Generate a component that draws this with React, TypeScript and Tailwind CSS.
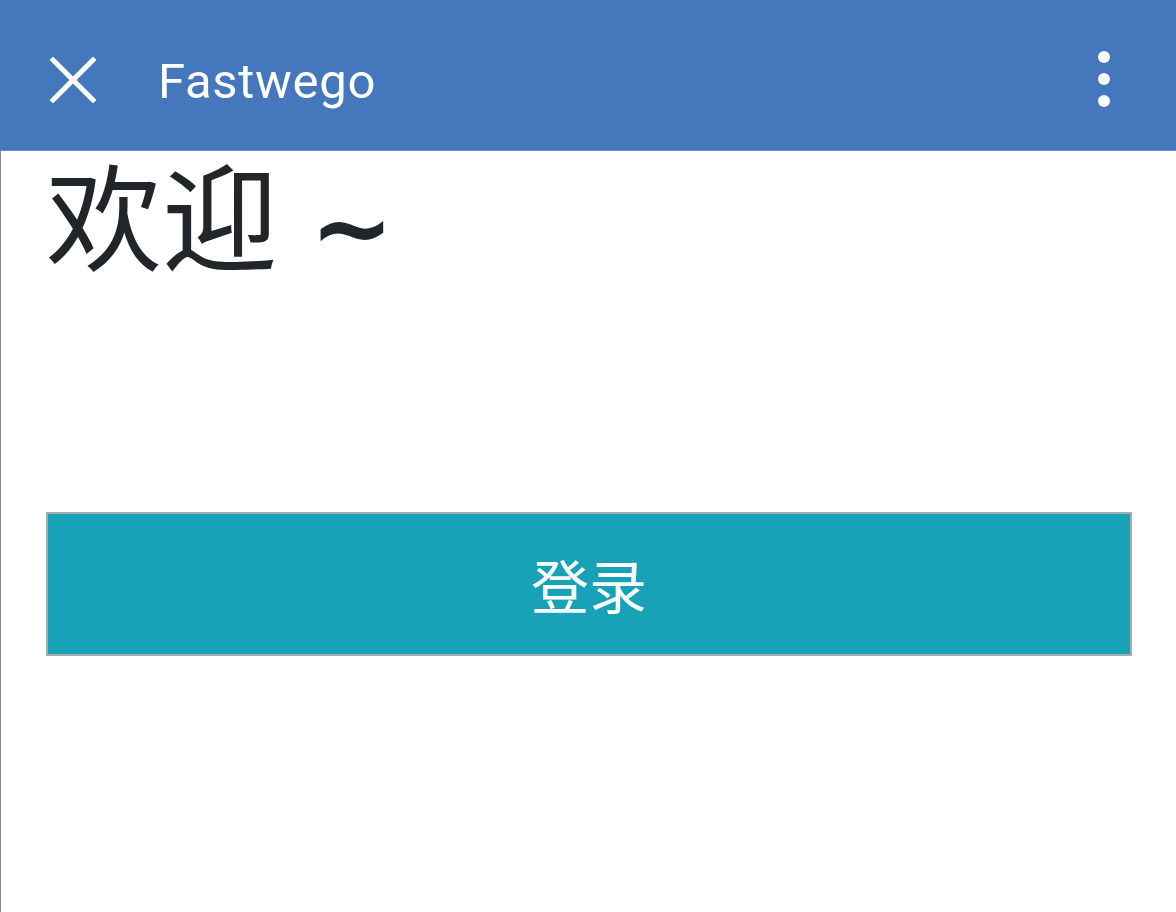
import React from "react";

const App = () => {
  return (
    <div className="w-[1176px] h-[912px] bg-white overflow-hidden flex flex-col" style={{ fontFamily: "Roboto, 'Noto Sans CJK SC', sans-serif" }}>
      <header className="h-[151px] bg-[#4577bd] flex items-center shrink-0 border-b border-[#6b8fc4]">
        <div className="w-[158px] flex items-center pl-[50px]">
          <svg width="46" height="46" viewBox="0 0 46 46" className="mt-[9px]">
            <path d="M3 3 L43 43 M43 3 L3 43" stroke="white" strokeWidth="5" strokeLinecap="square" fill="none" />
          </svg>
        </div>
        <h1 className="flex-1 text-white text-[49px] leading-none mt-[13px] tracking-[0.7px]" style={{ fontFamily: "Roboto, sans-serif" }}>
          Fastwego
        </h1>
        <div className="w-[144px] flex flex-col items-center gap-[10px] mt-[8px]">
          <span className="w-[12px] h-[12px] rounded-full bg-white" />
          <span className="w-[12px] h-[12px] rounded-full bg-white" />
          <span className="w-[12px] h-[12px] rounded-full bg-white" />
        </div>
      </header>
      <main className="flex-1 border-l border-[#8a8a8a] pl-[45px] pr-[44px]">
        <h2 className="text-[#222529] text-[116px] leading-[124px] h-[124px] -mt-[2px]" style={{ fontFamily: "'Noto Sans CJK SC', sans-serif" }}>
          欢迎 <span className="font-bold text-[100px] leading-none ml-[6px]" style={{ fontFamily: "'DejaVu Sans', sans-serif" }}>~</span>
        </h2>
        <button className="mt-[239px] w-[1086px] h-[144px] bg-[#18a2b8] border-2 border-[#a3adae] text-white text-[58px] flex items-center justify-center" style={{ fontFamily: "'Noto Sans CJK SC', sans-serif" }}>
          登录
        </button>
      </main>
    </div>
  );
};

export default App;
